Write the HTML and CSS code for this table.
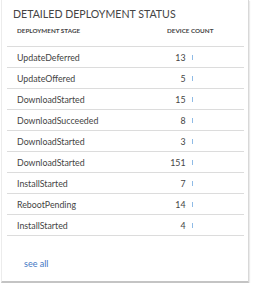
FILE: index.html
```html
<!DOCTYPE html>
<html>
<head>
<meta charset="utf-8">
<link rel="stylesheet" href="styles.css">
</head>
<body>
<div class="card">
  <h1 class="title">DETAILED DEPLOYMENT STATUS</h1>
  <div class="table">
    <div class="row head">
      <span class="stage">DEPLOYMENT STAGE</span>
      <span class="count">DEVICE COUNT</span>
    </div>
    <div class="row"><span class="stage">UpdateDeferred</span><span class="count"><span class="num">13</span><i class="bar"></i></span></div>
    <div class="row"><span class="stage">UpdateOffered</span><span class="count"><span class="num">5</span><i class="bar"></i></span></div>
    <div class="row"><span class="stage">DownloadStarted</span><span class="count"><span class="num">15</span><i class="bar"></i></span></div>
    <div class="row"><span class="stage">DownloadSucceeded</span><span class="count"><span class="num">8</span><i class="bar"></i></span></div>
    <div class="row"><span class="stage">DownloadStarted</span><span class="count"><span class="num">3</span><i class="bar"></i></span></div>
    <div class="row"><span class="stage">DownloadStarted</span><span class="count"><span class="num">151</span><i class="bar"></i></span></div>
    <div class="row"><span class="stage">InstallStarted</span><span class="count"><span class="num">7</span><i class="bar"></i></span></div>
    <div class="row"><span class="stage">RebootPending</span><span class="count"><span class="num">14</span><i class="bar"></i></span></div>
    <div class="row"><span class="stage">InstallStarted</span><span class="count"><span class="num">4</span><i class="bar"></i></span></div>
  </div>
  <a class="seeall" href="#">see all</a>
</div>
</body>
</html>
```
FILE: styles.css
```css
html, body { margin: 0; padding: 0; background: #fff; }
body { font-family: Lato, "Open Sans", sans-serif; color: #333; }
.card {
  width: 248px;
  height: 283px;
  box-sizing: border-box;
  margin-left: 1px;
  border-left: 1px solid #ececec;
  border-right: 1px solid #d8d8d8;
  border-bottom: 2px solid #c4c4c4;
  box-shadow: 1px 1px 1px rgba(0,0,0,0.08);
  position: relative;
  padding: 0 4px 0 5px;
}
.title {
  margin: 0;
  padding: 6px 0 0 6px;
  height: 20px;
  font-size: 10.6px;
  font-weight: 400;
  letter-spacing: 0;
  color: #444;
  line-height: 16px;
}
.table { display: flex; flex-direction: column; }
.row {
  display: flex;
  align-items: center;
  height: 20px;
  border-bottom: 1px solid #dcdcdc;
  font-size: 8.8px;
  color: #444;
}
.row.head {
  font-size: 6.3px;
  font-weight: 700;
  color: #444;
  align-items: flex-start;
  line-height: 9px;
}
.stage { padding-left: 10px; flex: 1; }
.count { width: 100px; flex-shrink: 0; display: flex; justify-content: flex-end; align-items: center; }
.head .count { justify-content: flex-start; padding-left: 23px; box-sizing: border-box; }
.num { text-align: right; }
.bar {
  display: inline-block;
  width: 1.5px;
  height: 5px;
  background: #8fbbe6;
  margin: 0 51px 0 6px;
}
.seeall {
  position: absolute;
  left: 22px;
  top: 258px;
  font-size: 9px;
  color: #3f78c4;
  text-decoration: none;
}
```
